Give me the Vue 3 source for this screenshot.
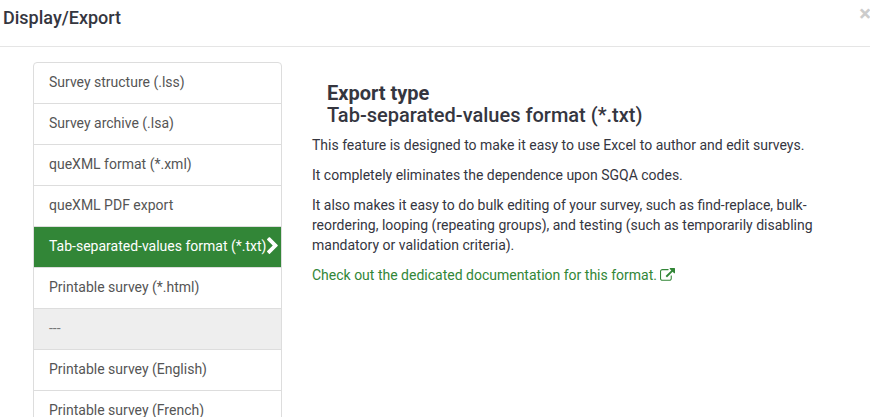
<script setup>
import { ref } from 'vue';

// Export formats shown in the left list
const exportTypes = [
  { id: 'structure', name: 'Survey structure (.lss)' },
  { id: 'archive', name: 'Survey archive (.lsa)' },
  { id: 'quexml', name: 'queXML format (*.xml)' },
  { id: 'quexmlpdf', name: 'queXML PDF export' },
  { id: 'tab', name: 'Tab-separated-values format (*.txt)' },
  { id: 'printable', name: 'Printable survey (*.html)' },
  { id: 'separator', name: '---', disabled: true },
  { id: 'printable-en', name: 'Printable survey (English)' },
  { id: 'printable-fr', name: 'Printable survey (French)' }
];

const selectedId = ref('tab');

// -- Methods --

// Disabled entries only separate the groups
function selectType(type) {

  if (!type.disabled) {
    selectedId.value = type.id;
  }

}

</script>

<template>
  <div class="modal-content">
    <header class="modal-header">
      <h4 class="modal-title">Display/Export</h4>
      <button type="button" class="close" aria-label="Close">×</button>
    </header>

    <div class="modal-body">
      <div class="type-column">
        <nav class="list-group">
          <a
            href="#"
            class="list-group-item"
            :class="{ active: selectedId === type.id, disabled: type.disabled }"
            v-for="type in exportTypes"
            :key="type.id"
            @click.prevent="selectType(type)"
          >
            {{ type.name }}
            <svg v-if="selectedId === type.id" class="chevron" viewBox="346 13 1036 1625">
              <path d="M1363 877l-742 742q-19 19-45 19t-45-19l-166-166q-19-19-19-45t19-45l531-531-531-531q-19-19-19-45t19-45l166-166q19-19 45-19t45 19l742 742q19 19 19 45t-19 45z" />
            </svg>
          </a>
        </nav>
      </div>

      <section class="info-column">
        <h4 class="info-title">
          <strong>Export type</strong><br>
          Tab-separated-values format (*.txt)
        </h4>
        <p>This feature is designed to make it easy to use Excel to author and edit surveys.</p>
        <p>It completely eliminates the dependence upon SGQA codes.</p>
        <p>It also makes it easy to do bulk editing of your survey, such as find-replace, bulk-reordering, looping (repeating groups), and testing (such as temporarily disabling mandatory or validation criteria).</p>
        <p>
          <a href="#" class="doc-link">Check out the dedicated documentation for this format.
            <svg class="external" viewBox="0 0 1792 1792">
              <path d="M1408 928v320q0 119-84.5 203.5t-203.5 84.5h-832q-119 0-203.5-84.5t-84.5-203.5v-832q0-119 84.5-203.5t203.5-84.5h704q14 0 23 9t9 23v64q0 14-9 23t-23 9h-704q-66 0-113 47t-47 113v832q0 66 47 113t113 47h832q66 0 113-47t47-113v-320q0-14 9-23t23-9h64q14 0 23 9t9 23zm384-864v512q0 26-19 45t-45 19-45-19l-176-176-652 652q-10 10-23 10t-23-10l-114-114q-10-10-10-23t10-23l652-652-176-176q-19-19-19-45t19-45 45-19h512q26 0 45 19t19 45z" />
            </svg>
          </a>
        </p>
      </section>
    </div>
  </div>
</template>

<style>
body {
  overflow: hidden;
  background-color: #fff;
}
</style>

<style scoped>
.modal-content {
  height: 100vh;
  overflow: hidden;
  font-family: Roboto, "Liberation Sans", sans-serif;
  font-size: 14px;
  line-height: 20px;
  color: #35363f;
}

.modal-header {
  display: flex;
  justify-content: space-between;
  padding: 8px 0 18px 3px;
  border-bottom: 1px solid #e5e5e5;
}

.modal-title {
  margin: 0;
  font-size: 18px;
  font-weight: 500;
}

.close {
  height: 12px;
  margin-right: -1px;
  padding: 0;
  border: 0;
  background: none;
  font-family: inherit;
  font-size: 22px;
  font-weight: 700;
  line-height: 12px;
  color: #ccc;
  cursor: pointer;
}

.modal-body {
  display: flex;
  align-items: flex-start;
  padding: 15px 15px 15px 18px;
}

.type-column,
.info-column {
  box-sizing: border-box;
  padding: 0 15px;
}

.type-column {
  width: calc(100% / 3);
}

.info-column {
  width: calc(200% / 3);
  padding-top: 20px;
}

.list-group {
  display: flex;
  flex-direction: column;
}

.list-group-item {
  position: relative;
  margin-bottom: -1px;
  padding: 9px 0 11px 15px;
  border: 1px solid #ddd;
  background-color: #fff;
  color: #555;
  text-decoration: none;
  white-space: nowrap;
}

.list-group-item:first-child {
  border-top-left-radius: 4px;
  border-top-right-radius: 4px;
}

.list-group-item.active {
  background-color: #328637;
  color: #fff;
}

.list-group-item.disabled {
  background-color: #eee;
  color: #777;
  cursor: not-allowed;
}

.chevron {
  position: absolute;
  top: 10px;
  right: 3px;
  height: 17px;
  fill: #fff;
}

.info-title {
  margin: 0 0 9px;
  padding-left: 15px;
  font-size: 20px;
  font-weight: 500;
  line-height: 22px;
}

.info-title strong {
  font-weight: 700;
}

p {
  margin: 0 0 10px;
}

.doc-link {
  color: #328637;
  text-decoration: none;
}

.external {
  width: 15px;
  height: 15px;
  vertical-align: -3px;
  fill: currentColor;
}
</style>
